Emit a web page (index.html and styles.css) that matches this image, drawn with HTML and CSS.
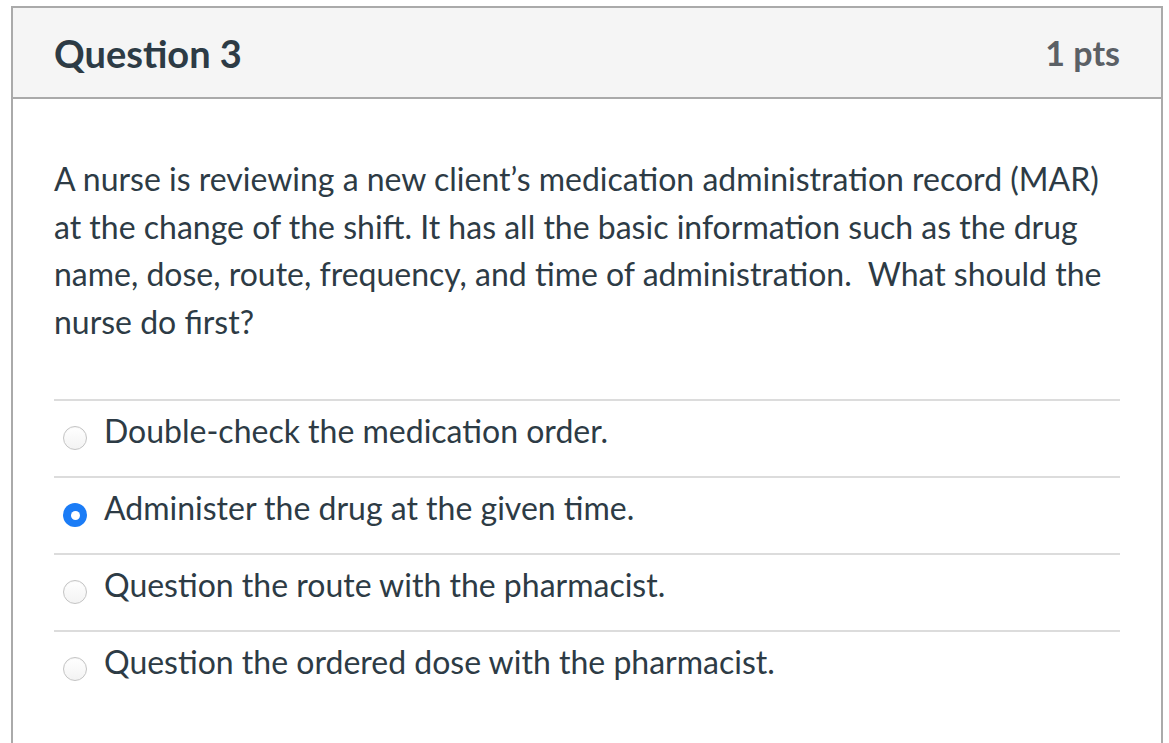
FILE: index.html
```html
<!DOCTYPE html>
<html lang="en">
<head>
<meta charset="utf-8">
<title>Question 3</title>
<link rel="stylesheet" href="styles.css">
</head>
<body>
<div class="card">
  <div class="card-header">
    <h2 class="q-title">Question 3</h2>
    <span class="q-points">1 pts</span>
  </div>
  <div class="card-body">
    <p class="q-text">A nurse is reviewing a new client’s medication administration record (MAR) at the change of the shift. It has all the basic information such as the drug name, dose, route, frequency, and time of administration.&nbsp; What should the nurse do first?</p>
    <div class="answers">
      <label class="answer"><span class="radio"></span><span class="answer-text">Double-check the medication order.</span></label>
      <label class="answer"><span class="radio radio-checked"></span><span class="answer-text">Administer the drug at the given time.</span></label>
      <label class="answer"><span class="radio"></span><span class="answer-text">Question the route with the pharmacist.</span></label>
      <label class="answer"><span class="radio"></span><span class="answer-text">Question the ordered dose with the pharmacist.</span></label>
    </div>
  </div>
</div>
</body>
</html>
```
FILE: styles.css
```css
html, body {
  margin: 0;
  padding: 0;
  background: #ffffff;
}
body {
  font-family: Lato, "Open Sans", "Liberation Sans", sans-serif;
  color: #2d3b45;
}
.card {
  margin: 6px 0 0 11px;
  width: 1152px;
  box-sizing: border-box;
  border: 2px solid #aaaaaa;
  border-bottom: none;
}
.card-header {
  height: 89px;
  background: #f5f5f5;
  border-bottom: 2px solid #aaaaaa;
  padding: 0 41px;
  display: flex;
  align-items: center;
  justify-content: space-between;
}
.q-title {
  margin: 0;
  font-size: 38px;
  font-weight: 700;
  color: #2d3b45;
  line-height: 1;
}
.q-points {
  font-size: 34px;
  font-weight: 700;
  color: #5b6065;
  line-height: 1;
}
.card-body {
  padding: 56px 41px 60px 41px;
}
.q-text {
  margin: 0;
  font-size: 32px;
  line-height: 47.5px;
}
.answers {
  margin-top: 54px;
}
.answer {
  display: flex;
  align-items: flex-start;
  height: 77px;
  box-sizing: border-box;
  border-top: 2px solid #dcdcdc;
  padding: 14px 0 0 0;
  font-size: 32px;
  line-height: 32px;
}
.radio {
  flex: none;
  width: 24px;
  height: 24px;
  box-sizing: border-box;
  margin: 11px 17px 0 9px;
  border-radius: 50%;
  border: 1px solid #c4c4c4;
  background: linear-gradient(#ffffff, #f3f3f3);
  box-shadow: inset 0 1px 1px rgba(0,0,0,0.04);
  display: flex;
  align-items: center;
  justify-content: center;
}
.radio-checked {
  border: none;
  background: #1b7cf6;
  box-shadow: none;
}
.radio-checked::after {
  content: "";
  width: 9px;
  height: 9px;
  border-radius: 50%;
  background: #ffffff;
}
.answer-text {
  white-space: nowrap;
}
```
